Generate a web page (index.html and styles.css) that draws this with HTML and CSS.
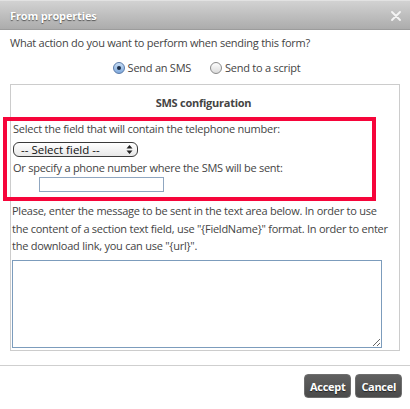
FILE: index.html
```html
<!DOCTYPE html>
<html lang="en">
<head>
  <meta charset="UTF-8" />
  <title>From properties</title>
  <link rel="stylesheet" href="styles.css">
</head>
<body>
  <div class="dialog">
    <div class="titlebar">
      <span class="title">From properties</span>
      <svg class="close" width="10" height="10" viewBox="0 0 10 10">
        <path d="M1 1 L9 9 M9 1 L1 9" stroke="#f4f4f4" stroke-width="1.8" stroke-linecap="round" />
      </svg>
    </div>

    <div class="content">
      <p class="question">What action do you want to perform when sending this form?</p>

      <div class="radios">
        <label class="radio"><span class="dot checked"></span>Send an SMS</label>
        <label class="radio"><span class="dot"></span>Send to a script</label>
      </div>

      <div class="sms-box">
        <h3>SMS configuration</h3>

        <div class="highlight">
          <div class="line">Select the field that will contain the telephone number:</div>
          <div class="fake-select">
            <span>-- Select field --</span>
            <svg width="7" height="11" viewBox="0 0 7 11">
              <path d="M3.5 1 L6.5 4.5 L0.5 4.5 Z M3.5 10 L6.5 6.5 L0.5 6.5 Z" fill="#222" />
            </svg>
          </div>
          <div class="line">Or specify a phone number where the SMS will be sent:</div>
          <input class="phone" type="text">
        </div>

        <p class="help">Please, enter the message to be sent in the text area below. In order to use the content of a section text field, use "{FieldName}" format. In order to enter the download link, you can use "{url}".</p>

        <textarea class="message"></textarea>
      </div>
    </div>

    <div class="footer">
      <button class="btn">Accept</button>
      <button class="btn">Cancel</button>
    </div>
  </div>
</body>
</html>
```

FILE: styles.css
```css
body {
  margin: 0;
  background: #fff;
  font-family: 'Open Sans', 'Noto Sans', sans-serif;
  font-size: 11px;
  letter-spacing: -0.25px;
  color: #444;
}
.dialog {
  width: 410px;
  height: 409px;
  overflow: hidden;
}
.titlebar {
  height: 30px;
  display: flex;
  align-items: center;
  justify-content: space-between;
  padding: 0 9px 0 10px;
  box-sizing: border-box;
  background: linear-gradient(#d2d2d2, #acacac);
  border-top: 1px solid #e2e2e2;
  border-bottom: 1px solid #9c9c9c;
}
.title {
  color: #fff;
  font-weight: bold;
  font-size: 11px;
  letter-spacing: -0.15px;
  text-shadow: 0 1px 1px #555;
}
.close {
  margin-top: 1px;
}
.content {
  padding: 0 10px;
}
.question {
  margin: 4px 0 0;
  line-height: 18px;
}
.radios {
  display: flex;
  justify-content: center;
  gap: 19px;
  margin-top: 7px;
  padding-left: 3px;
}
.radio {
  display: flex;
  align-items: center;
  gap: 3px;
  line-height: 18px;
}
.dot {
  width: 10px;
  height: 10px;
  border-radius: 50%;
  border: 1px solid #8a8a8a;
  background: linear-gradient(#fdfdfd, #dcdcdc);
  position: relative;
}
.dot.checked {
  border-color: #5a7aa8;
  background: linear-gradient(#c6dcf4, #7fa9dc);
}
.dot.checked::after {
  content: '';
  position: absolute;
  width: 4px;
  height: 4px;
  border-radius: 50%;
  background: #1b2b44;
  left: 3px;
  top: 3px;
}
.sms-box {
  margin-top: 7px;
  border: 1px solid #ccc;
  padding: 0 4px 5px 1px;
  height: 267px;
  box-sizing: border-box;
}
.sms-box h3 {
  margin: 9px 0 0;
  font-size: 11px;
  text-align: center;
  line-height: 18px;
  color: #444;
}
.highlight {
  margin: 5px 19px 0 -9px;
  border: 4px solid #f6053a;
  padding: 0 0 5px 6px;
}
.line {
  line-height: 16px;
}
.fake-select {
  width: 125px;
  height: 15px;
  box-sizing: border-box;
  margin: 5px 0 3px;
  border: 1px solid #3a3a3a;
  border-radius: 6px;
  background: linear-gradient(#fff, #e8e8e8);
  display: flex;
  align-items: center;
  justify-content: space-between;
  padding: 0 4px 0 7px;
  color: #111;
  font-size: 11.5px;
  letter-spacing: 0;
  line-height: 13px;
}
.phone {
  display: block;
  width: 125px;
  height: 15px;
  box-sizing: border-box;
  margin: 1px 0 0 26px;
  border: 1px solid #8fa6c0;
  padding: 0;
}
.help {
  margin: 1px 0 0;
  line-height: 17.5px;
}
.message {
  display: block;
  width: 370px;
  height: 88px;
  box-sizing: border-box;
  margin-top: 5px;
  border: 1px solid #7c9cbc;
  resize: both;
}
.footer {
  margin-top: 14px;
  border-top: 1px solid #cfcfcf;
  display: flex;
  justify-content: flex-end;
  gap: 4px;
  padding: 8px 8px 0 0;
}
.btn {
  height: 24px;
  padding: 0 5px;
  border: 1px solid #6e6e6e;
  border-radius: 4px;
  background: linear-gradient(#606060, #4a4a4a);
  color: #fff;
  font-family: 'Open Sans', 'Noto Sans', sans-serif;
  font-weight: bold;
  font-size: 11px;
  letter-spacing: -0.3px;
  text-shadow: 0 1px 1px #222;
}
```
